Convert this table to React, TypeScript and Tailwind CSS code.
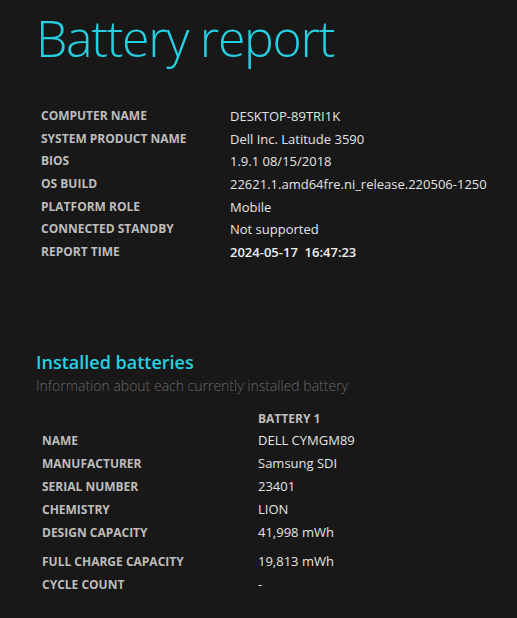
const systemInfo: [string, string][] = [
  ["COMPUTER NAME", "DESKTOP-89TRI1K"],
  ["SYSTEM PRODUCT NAME", "Dell Inc. Latitude 3590"],
  ["BIOS", "1.9.1 08/15/2018"],
  ["OS BUILD", "22621.1.amd64fre.ni_release.220506-1250"],
  ["PLATFORM ROLE", "Mobile"],
  ["CONNECTED STANDBY", "Not supported"],
];

const batteryInfo: [string, string][] = [
  ["NAME", "DELL CYMGM89"],
  ["MANUFACTURER", "Samsung SDI"],
  ["SERIAL NUMBER", "23401"],
  ["CHEMISTRY", "LION"],
  ["DESIGN CAPACITY", "41,998 mWh"],
];

export default function App() {
  return (
    <div className="min-h-screen w-full bg-[#181818] font-['Open_Sans',sans-serif] text-[#e4e4e4]">
      {/* Title */}
      <h1 className="pl-[36px] pt-[5px] text-[50px] font-[350] leading-[66px] tracking-[-1.3px] text-[#27d0e0]">
        Battery report
      </h1>

      {/* System info */}
      <div className="mt-[34px] grid grid-cols-[189px_1fr] pl-[41px]">
        {systemInfo.map(([label, value]) => (
          <div key={label} className="contents">
            <div className="h-[22.7px] text-[12px] font-bold leading-[22.7px] text-[#bdbdbd]">{label}</div>
            <div className="h-[22.7px] text-[13px] leading-[22.7px]">{value}</div>
          </div>
        ))}
        <div className="h-[22.7px] text-[12px] font-bold leading-[22.7px] text-[#bdbdbd]">REPORT TIME</div>
        <div className="h-[22.7px] text-[13px] font-semibold leading-[22.7px] text-[#f0f0f0]">
          2024-05-17&nbsp;&nbsp;16:47:23
        </div>
      </div>

      {/* Installed batteries */}
      <div className="mt-[87px] pl-[36px]">
        <h2 className="text-[18px] font-semibold leading-[22px] text-[#27d0e0]">Installed batteries</h2>
        <p className="text-[14px] font-light leading-[26px] text-[#666666]">
          Information about each currently installed battery
        </p>
      </div>

      <div className="mt-[10px] grid grid-cols-[216px_1fr] pl-[42px]">
        <div />
        <div className="h-[20px] text-[12px] font-bold leading-[20px] text-[#bdbdbd]">BATTERY 1</div>
        {batteryInfo.map(([label, value]) => (
          <div key={label} className="contents">
            <div className="h-[23px] text-[12px] font-bold leading-[23px] text-[#bdbdbd]">{label}</div>
            <div className="h-[23px] text-[13px] leading-[23px]">{value}</div>
          </div>
        ))}
        <div className="mt-[6px] h-[23px] text-[12px] font-bold leading-[23px] text-[#bdbdbd]">FULL CHARGE CAPACITY</div>
        <div className="mt-[6px] h-[23px] text-[13px] leading-[23px]">19,813 mWh</div>
        <div className="h-[23px] text-[12px] font-bold leading-[23px] text-[#bdbdbd]">CYCLE COUNT</div>
        <div className="h-[23px] text-[13px] leading-[23px]">-</div>
      </div>
    </div>
  );
}
